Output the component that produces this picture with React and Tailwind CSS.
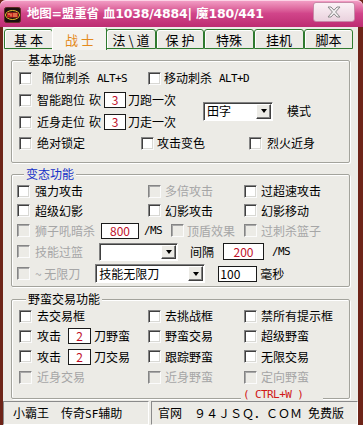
import React from "react";

const Box = ({ disabled }) => (
  <span
    className={`block w-[13px] h-[13px] shrink-0 border border-t-[#858585] border-l-[#858585] border-b-[#fbfbfb] border-r-[#fbfbfb] ${
      disabled
        ? "bg-[#ecebe6] shadow-[inset_1px_1px_0_#a8a8a8]"
        : "bg-white shadow-[inset_1px_1px_0_#404040,inset_-1px_-1px_0_#d8d8d4]"
    }`}
  />
);

const Label = ({ children, disabled, className = "" }) => (
  <span className={`whitespace-nowrap ${disabled ? "text-[#a6a6a6]" : "text-black"} ${className}`}>{children}</span>
);

const Mono = ({ children, className = "" }) => (
  <span className={`font-['DejaVu_Sans_Mono',monospace] text-[11px] tracking-[-0.6px] whitespace-nowrap ${className}`}>
    {children}
  </span>
);

const Input = ({ value, className = "", left }) => (
  <span
    className={`flex items-center h-[16px] border border-[#1a1a1a] bg-white text-[12px] ${
      left ? "justify-start pl-[1px] text-black" : "justify-center text-[#c0102a]"
    } ${className}`}
  >
    {value}
  </span>
);

const Arrow = () => (
  <span className="flex items-center justify-center w-[15px] h-full bg-[#ecebe6] border border-t-white border-l-white border-b-[#404040] border-r-[#404040] shadow-[inset_-1px_-1px_0_#808080]">
    <span className="block w-0 h-0 border-l-[3.5px] border-r-[3.5px] border-t-[4px] border-l-transparent border-r-transparent border-t-black" />
  </span>
);

const Select = ({ value, className = "" }) => (
  <span
    className={`flex items-stretch bg-white border border-t-[#808080] border-l-[#808080] border-b-white border-r-white shadow-[inset_1px_1px_0_#404040] p-[1px] ${className}`}
  >
    <span className="flex-1 flex items-center pl-[2px] text-black whitespace-nowrap">{value}</span>
    <Arrow />
  </span>
);

const Group = ({ title, titleClass = "text-black", className = "", children }) => (
  <fieldset
    className={`border border-[#a3a39c] rounded-[2px] shadow-[1px_1px_0_#ffffff,inset_1px_1px_0_#ffffff] ${className}`}
  >
    <legend className={`ml-[7px] px-[2px] leading-[14px] bg-[#ecebe6] ${titleClass}`}>{title}</legend>
    {children}
  </fieldset>
);

const Row = ({ className = "", children }) => <div className={`flex items-center ${className}`}>{children}</div>;

const tabs = [
  { name: "基 本", w: "w-[49px]" },
  { name: "战 士", w: "w-[55px]", active: true },
  { name: "法 \\ 道", w: "w-[50px]" },
  { name: "保 护", w: "w-[48px]" },
  { name: "特殊", w: "w-[50px]" },
  { name: "挂机", w: "w-[50px]" },
  { name: "脚本", w: "w-[49px]" },
];

const Logo = () => (
  <svg width="17" height="16" viewBox="0 0 17 16">
    <rect x="0.5" y="0.5" width="16" height="15" rx="2" fill="#1a1010" stroke="#5a2a20" />
    <ellipse cx="8.5" cy="8" rx="7" ry="4.5" fill="none" stroke="#e8c030" strokeWidth="1" />
    <rect x="3" y="5.5" width="11" height="5" fill="#c82020" />
    <path d="M4 7h2M7 6.5v3M9 7h4M9 9h4" stroke="#ffe080" strokeWidth="0.8" />
  </svg>
);

export default function App() {
  return (
    <div className="w-[363px] h-[425px] flex flex-col overflow-hidden bg-[#6e2418] font-['Noto_Sans_CJK_SC','Noto_Sans',sans-serif] text-[12px] leading-none select-none">
      {/* title bar */}
      <div className="h-[27px] shrink-0 flex items-center rounded-t-[6px] bg-linear-to-b from-[#f3a2c8] via-[#d1458a] to-[#bd2c72] shadow-[inset_0_1px_0_#fcd3e6]">
        <div className="ml-[4px] mt-[2px]">
          <Logo />
        </div>
        <div className="ml-[6px] mt-[2px] text-white font-bold text-[12.5px] font-['DejaVu_Sans','Noto_Sans_CJK_SC',sans-serif] whitespace-nowrap tracking-[-0.2px]">
          地图=盟重省 血1038/4884| 魔180/441
        </div>
        <div className="ml-auto mr-[8px] mb-[3px] w-[42px] h-[20px] rounded-[3px] border border-[#c88aa8] bg-linear-to-b from-[#fbf2f6] to-[#ead2de] flex items-center justify-center">
          <svg width="14" height="12" viewBox="0 0 14 12">
            <path
              d="M1 1h3l3 3.2L10 1h3L8.6 6 13 11h-3L7 7.8 4 11H1l4.4-5z"
              fill="#f4f0f2"
              stroke="#8a8a8a"
              strokeWidth="1"
              strokeLinejoin="round"
            />
          </svg>
        </div>
      </div>

      {/* body */}
      <div className="flex-1 flex flex-col ml-[3px] mr-[5px] bg-[#ecebe6]">
        {/* tabs */}
        <div className="h-[23px] shrink-0 flex items-end pl-[1px]">
          {tabs.map((t) =>
            t.active ? (
              <div
                key={t.name}
                className={`${t.w} h-[23px] flex items-center justify-center rounded-t-[3px] border border-b-0 border-t-white border-l-white border-r-[#2f7a2f] bg-[#f4f3ef] text-[#e48a1c] text-[13px] -mx-[1px] z-10`}
              >
                {t.name}
              </div>
            ) : (
              <div
                key={t.name}
                className={`${t.w} h-[20px] mb-[1px] flex items-center justify-center rounded-t-[3px] border border-[#2f7a2f] shadow-[inset_1px_1px_0_#ffffff] text-black text-[13px]`}
              >
                {t.name}
              </div>
            )
          )}
        </div>

        {/* panel */}
        <div className="flex-1 flex flex-col pl-[8px] pr-[8px]">
          <Group title="基本功能" className="mt-[3px] pl-[7px] pb-[9px]">
            <Row className="h-[22px]">
              <Row className="w-[129px]">
                <Box />
                <Label className="ml-[10px]">隔位刺杀</Label>
                <Mono className="ml-[7px]">ALT+S</Mono>
              </Row>
              <Box />
              <Label className="ml-[3px]">移动刺杀</Label>
              <Mono className="ml-[7px]">ALT+D</Mono>
            </Row>
            <div className="flex">
              <div className="w-[184px]">
                <Row className="h-[22px]">
                  <Box />
                  <Label className="ml-[5px]">智能跑位</Label>
                  <Label className="ml-[4px]">砍</Label>
                  <Input value="3" className="ml-[3px] w-[22px]" />
                  <Label className="ml-[2px]">刀跑一次</Label>
                </Row>
                <Row className="h-[22px]">
                  <Box />
                  <Label className="ml-[5px]">近身走位</Label>
                  <Label className="ml-[4px]">砍</Label>
                  <Input value="3" className="ml-[3px] w-[22px]" />
                  <Label className="ml-[2px]">刀走一次</Label>
                </Row>
              </div>
              <Row>
                <Select value="田字" className="w-[70px] h-[19px]" />
                <Label className="ml-[14px]">模式</Label>
              </Row>
            </div>
            <Row className="h-[20px]">
              <Row className="w-[122px]">
                <Box />
                <Label className="ml-[5px]">绝对锁定</Label>
              </Row>
              <Row className="w-[108px]">
                <Box />
                <Label className="ml-[3px]">攻击变色</Label>
              </Row>
              <Box />
              <Label className="ml-[5px]">烈火近身</Label>
            </Row>
          </Group>

          <Group title="变态功能" titleClass="text-[#1530c8]" className="mt-[4px] pl-[5px]">
            <Row className="h-[20px]">
              <Row className="w-[131px]">
                <Box />
                <Label className="ml-[5px]">强力攻击</Label>
              </Row>
              <Row className="w-[96px]">
                <Box disabled />
                <Label disabled className="ml-[4px]">多倍攻击</Label>
              </Row>
              <Box />
              <Label className="ml-[4px]">过超速攻击</Label>
            </Row>
            <Row className="h-[19px]">
              <Row className="w-[131px]">
                <Box />
                <Label className="ml-[5px]">超级幻影</Label>
              </Row>
              <Row className="w-[96px]">
                <Box />
                <Label className="ml-[4px]">幻影攻击</Label>
              </Row>
              <Box />
              <Label className="ml-[4px]">幻影移动</Label>
            </Row>
            <Row className="h-[21px]">
              <Row className="w-[154px]">
                <Box disabled />
                <Label disabled className="ml-[5px]">狮子吼暗杀</Label>
                <Input value="800" className="ml-[6px] w-[38px]" />
                <Mono className="ml-[5px]">/MS</Mono>
              </Row>
              <Row className="w-[73px]">
                <Box disabled />
                <Label disabled className="ml-[3px]">顶盾效果</Label>
              </Row>
              <Box disabled />
              <Label disabled className="ml-[4px]">过刺杀篮子</Label>
            </Row>
            <Row className="h-[21px]">
              <Box disabled />
              <Label disabled className="ml-[5px]">技能过篮</Label>
              <Select value="" className="ml-[16px] w-[79px] h-[18px]" />
              <Label className="ml-[12px]">间隔</Label>
              <Input value="200" className="ml-[9px] w-[41px] h-[17px]" />
              <Mono className="ml-[8px]">/MS</Mono>
            </Row>
            <Row className="h-[24px] pb-[1px]">
              <Box disabled />
              <Label disabled className="ml-[5px]">~ 无限刀</Label>
              <Select value="技能无限刀" className="ml-[15px] w-[110px] h-[19px]" />
              <Input value="100" left className="ml-[13px] w-[39px] h-[16px]" />
              <Label className="ml-[3px]">毫秒</Label>
            </Row>
          </Group>

          <Group title="野蛮交易功能" className="mt-[5px] pl-[7px]">
            <Row className="h-[20px]">
              <Row className="w-[129px]">
                <Box />
                <Label className="ml-[5px]">去交易框</Label>
              </Row>
              <Row className="w-[96px]">
                <Box />
                <Label className="ml-[4px]">去挑战框</Label>
              </Row>
              <Box />
              <Label className="ml-[4px]">禁所有提示框</Label>
            </Row>
            <Row className="h-[20px]">
              <Row className="w-[129px]">
                <Box />
                <Label className="ml-[5px]">攻击</Label>
                <Input value="2" className="ml-[7px] w-[23px]" />
                <Label className="ml-[3px]">刀野蛮</Label>
              </Row>
              <Row className="w-[96px]">
                <Box />
                <Label className="ml-[4px]">野蛮交易</Label>
              </Row>
              <Box />
              <Label className="ml-[4px]">超级野蛮</Label>
            </Row>
            <Row className="h-[21px]">
              <Row className="w-[129px]">
                <Box />
                <Label className="ml-[5px]">攻击</Label>
                <Input value="2" className="ml-[7px] w-[23px]" />
                <Label className="ml-[3px]">刀交易</Label>
              </Row>
              <Row className="w-[96px]">
                <Box />
                <Label className="ml-[4px]">跟踪野蛮</Label>
              </Row>
              <Box />
              <Label className="ml-[4px]">无限交易</Label>
            </Row>
            <Row className="h-[20px]">
              <Row className="w-[129px]">
                <Box disabled />
                <Label disabled className="ml-[5px]">近身交易</Label>
              </Row>
              <Row className="w-[96px]">
                <Box disabled />
                <Label disabled className="ml-[4px]">近身野蛮</Label>
              </Row>
              <Box disabled />
              <Label disabled className="ml-[4px]">定向野蛮</Label>
            </Row>
            <Row className="h-[14px] -mb-[3px] relative z-10">
              <span className="ml-[222px] w-[82px] h-[14px] pl-[2px] bg-[#ecebe6] flex items-center">
                <Mono className="text-[#d01818]">( CTRL+W )</Mono>
              </span>
            </Row>
          </Group>

          {/* status bar */}
          <div className="mt-auto -mx-[8px] h-[26px] flex items-stretch pt-[2px]">
            <div className="w-[146px] flex items-center pl-[9px] border border-t-[#8a8a8a] border-l-[#8a8a8a] border-b-white border-r-white">
              <Label>小霸王</Label>
              <Label className="ml-[12px]">
                传奇<span className="font-['DejaVu_Sans_Mono',monospace] text-[11px]">SF</span>辅助
              </Label>
            </div>
            <div className="flex-1 ml-[2px] flex items-center pl-[6px] border border-t-[#8a8a8a] border-l-[#8a8a8a] border-b-white border-r-white">
              <Label>官网</Label>
              <Label className="ml-[12px]">９４ＪＳＱ．ＣＯＭ</Label>
              <Label className="ml-[6px]">免费版</Label>
            </div>
          </div>
        </div>
      </div>
    </div>
  );
}
